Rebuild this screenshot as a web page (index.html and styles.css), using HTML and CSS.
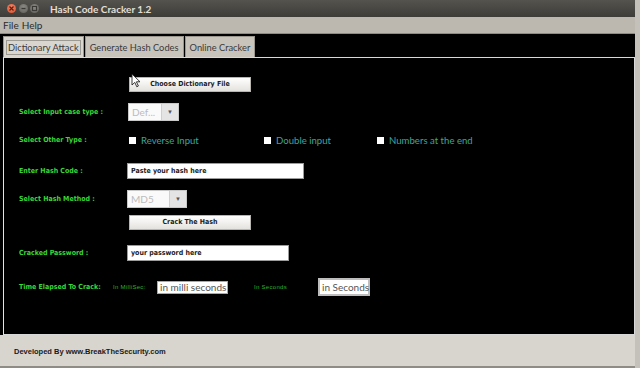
FILE: index.html
```html
<!DOCTYPE html>
<html>
<head>
    <title>Hash Code Cracker 1.2</title>
    <meta charset="UTF-8">
    <link rel="stylesheet" href="styles.css">
</head>
<body>
    <div class="window">
        <div class="titlebar">
            <div class="win-buttons">
                <span class="wbtn close">
                    <svg width="7" height="7" viewBox="0 0 7 7"><path d="M1.5 1.5L5.5 5.5M5.5 1.5L1.5 5.5" stroke="#6a1c0a" stroke-width="1.3"/></svg>
                </span>
                <span class="wbtn">
                    <svg width="7" height="7" viewBox="0 0 7 7"><path d="M1.5 3.5H5.5" stroke="#3a3935" stroke-width="1.3"/></svg>
                </span>
                <span class="wbtn">
                    <svg width="7" height="7" viewBox="0 0 7 7"><rect x="1.5" y="1.5" width="4" height="4" fill="none" stroke="#3a3935" stroke-width="1.1"/></svg>
                </span>
            </div>
            <span class="title">Hash Code Cracker 1.2</span>
        </div>

        <div class="menubar">
            <span>File</span>
            <span>Help</span>
        </div>

        <div class="tabs">
            <div class="tab active"><span>Dictionary Attack</span></div>
            <div class="tab"><span>Generate Hash Codes</span></div>
            <div class="tab"><span>Online Cracker</span></div>
        </div>

        <div class="panel">
            <svg class="cursor" width="10" height="15" viewBox="0 0 10 15">
                <path d="M1 1V12L3.8 9.4L5.8 13.8L7.4 13L5.4 8.8H9Z" fill="#fff" stroke="#222" stroke-width="0.9"/>
            </svg>
            <div class="form">
                <div class="row">
                    <span class="label"></span>
                    <button class="btn">Choose Dictionary File</button>
                </div>
                <div class="row">
                    <span class="label">Select Input case type :</span>
                    <div class="combo combo-case">
                        <span class="combo-text">Def...</span>
                        <span class="combo-arrow">&#9660;</span>
                    </div>
                </div>
                <div class="row">
                    <span class="label">Select Other Type :</span>
                    <label class="check w1"><span class="box"></span>Reverse Input</label>
                    <label class="check w2"><span class="box"></span>Double input</label>
                    <label class="check"><span class="box"></span>Numbers at the end</label>
                </div>
                <div class="row">
                    <span class="label">Enter Hash Code :</span>
                    <div class="field field-hash">Paste your hash here</div>
                </div>
                <div class="row">
                    <span class="label">Select Hash Method :</span>
                    <div class="combo combo-method">
                        <span class="combo-text">MD5</span>
                        <span class="combo-arrow">&#9660;</span>
                    </div>
                </div>
                <div class="row">
                    <span class="label"></span>
                    <button class="btn btn-crack">Crack The Hash</button>
                </div>
                <div class="row">
                    <span class="label">Cracked Password :</span>
                    <div class="field field-pass">your password here</div>
                </div>
                <div class="row">
                    <span class="label label-time">Time Elapsed To Crack:</span>
                    <span class="small small-ms">In MilliSec:</span>
                    <div class="tfield tfield-ms">in milli seconds</div>
                    <span class="small small-s">In Seconds</span>
                    <div class="tfield tfield-s">in Seconds</div>
                </div>
            </div>
        </div>

        <div class="footer">Developed By www.BreakTheSecurity.com</div>
    </div>
</body>
</html>
```

FILE: styles.css
```css
* {
    box-sizing: border-box;
    margin: 0;
    padding: 0;
}

body {
    width: 640px;
    height: 368px;
    overflow: hidden;
    background: #c4c1ba;
    font-family: 'Liberation Sans', Arial, sans-serif;
}

.window {
    width: 635px;
    height: 368px;
    display: flex;
    flex-direction: column;
    background: #000;
}

/* title bar */
.titlebar {
    height: 17px;
    display: flex;
    align-items: center;
    background: linear-gradient(#55534e, #3d3c38);
    padding-left: 7px;
}

.win-buttons {
    display: flex;
    gap: 2.5px;
}

.wbtn {
    width: 9px;
    height: 9px;
    border-radius: 50%;
    background: radial-gradient(circle at 50% 35%, #8d8b85, #5e5c57);
    display: flex;
    align-items: center;
    justify-content: center;
}

.wbtn.close {
    background: radial-gradient(circle at 50% 35%, #f5876a, #d94f2b);
}

.title {
    margin-left: 11px;
    font-family: 'Lato', sans-serif;
    font-weight: bold;
    font-size: 10px;
    color: #e2ded5;
}

/* menu */
.menubar {
    height: 17px;
    display: flex;
    align-items: center;
    gap: 3px;
    padding-left: 3px;
    background: #bcb8af;
    font-family: 'Lato', sans-serif;
    font-size: 10px;
    color: #2c2c2c;
    border-bottom: 1px solid #8e8b84;
}

/* tabs */
.tabs {
    height: 23px;
    display: flex;
    align-items: flex-end;
    gap: 1px;
    padding-left: 3px;
    background: #000;
}

.tab {
    height: 21px;
    padding: 0 2px;
    display: flex;
    align-items: center;
    background: #c8c4bc;
    border: 1px solid #9a968e;
    border-bottom: none;
    font-family: 'Lato', sans-serif;
    font-size: 9.3px;
    color: #3a3a3a;
}

.tab span {
    padding: 1px 1px;
    border: 1px solid transparent;
}

.tab.active {
    background: #d9d6cf;
}

.tab.active span {
    border-color: #9d9a93;
}

/* panel */
.panel {
    position: relative;
    height: 278px;
    margin-left: 3px;
    border: 1px solid #d8d8d8;
    border-left-color: #e4e4e4;
    background: #000;
}

.cursor {
    position: absolute;
    left: 127px;
    top: 15px;
}

.form {
    display: grid;
    grid-template-rows: 28px 28px 31px 28px 23px 31px 34px 20px;
    padding: 16px 0 0 15px;
}

.row {
    height: 20px;
    display: flex;
    align-items: center;
}

.label {
    width: 108px;
    flex-shrink: 0;
    font-family: 'DejaVu Sans Condensed', 'Liberation Sans', sans-serif;
    font-weight: bold;
    font-size: 7px;
    color: #38d838;
}

.btn {
    width: 122px;
    height: 15px;
    margin-left: 2px;
    background: linear-gradient(#ffffff, #e4e2de);
    border: 1px solid #b9b6b0;
    font-family: 'DejaVu Sans Condensed', 'Liberation Sans', sans-serif;
    font-weight: bold;
    font-size: 7px;
    color: #1c1c1c;
}

.combo {
    height: 18px;
    margin-left: 1px;
    display: flex;
    background: #fafafa;
    border: 1px solid #c8c8c8;
}

.combo-text {
    flex: 1;
    padding-left: 3px;
    display: flex;
    align-items: center;
    font-family: 'Lato', sans-serif;
    font-size: 10px;
    color: #bcbcbc;
}

.combo-arrow {
    width: 17px;
    border-left: 1px solid #cfcfcf;
    background: #e4e4e4;
    display: flex;
    align-items: center;
    justify-content: center;
    font-size: 6px;
    color: #555;
}

.combo-case {
    width: 51px;
}

.combo-method {
    width: 60px;
    margin-left: 0;
}

.check {
    display: flex;
    align-items: center;
    font-family: 'Lato', sans-serif;
    font-size: 9.6px;
    color: #3aa69c;
}

.check .box {
    width: 7px;
    height: 7px;
    margin: 0 5px 0 2px;
    background: #fff;
}

.check.w1 {
    width: 135px;
}

.check.w2 {
    width: 113px;
}

.field {
    height: 16px;
    padding-left: 3px;
    display: flex;
    align-items: center;
    background: #fff;
    border: 1px solid #9c9c9c;
    font-family: 'DejaVu Sans Condensed', 'Liberation Sans', sans-serif;
    font-weight: bold;
    font-size: 7px;
    color: #222;
}

.field-hash {
    width: 177px;
}

.field-pass {
    width: 162px;
}

.label-time {
    width: 94px;
}

.small {
    font-family: 'Liberation Sans', Arial, sans-serif;
    font-size: 6px;
    letter-spacing: 0.3px;
    color: #2fb02f;
}

.small-ms {
    width: 44px;
}

.small-s {
    width: 64px;
    margin-left: 26px;
}

.tfield {
    height: 13px;
    padding-left: 2px;
    display: flex;
    align-items: center;
    white-space: nowrap;
    background: #fff;
    border: 1px solid #a9a9a9;
    font-family: 'Lato', sans-serif;
    font-size: 10px;
    color: #555;
}

.tfield-ms {
    width: 71px;
}

.tfield-s {
    width: 52px;
    height: 18px;
    border-width: 2px;
    border-color: #bdbdbd;
}

/* footer */
.footer {
    height: 33px;
    padding: 12px 0 0 14px;
    background: #d8d5ce;
    border-bottom: 2px solid #8f8c86;
    font-family: 'Liberation Sans', Arial, sans-serif;
    font-weight: bold;
    font-size: 7.5px;
    color: #1a1a1a;
}
```
